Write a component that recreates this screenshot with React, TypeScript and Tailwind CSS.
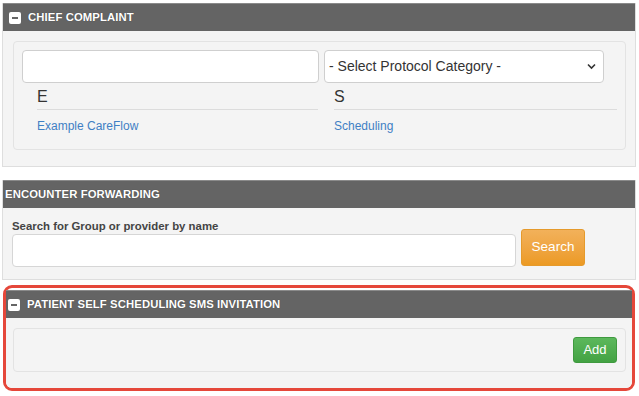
import React from 'react';

const MinusBox = () => (
  <span className="flex h-[12px] w-[12px] items-center justify-center rounded-[2px] bg-white">
    <span className="h-[2px] w-[6px] bg-[#666]" />
  </span>
);

const Header = ({ title, icon = true, inset = 'pl-[6px]' }: { title: string; icon?: boolean; inset?: string }) => (
  <div className={`flex h-[28px] items-center gap-[7px] bg-[#646464] border-t border-[#8a8a8a] ${inset}`}>
    {icon && <MinusBox />}
    <span className="text-[11.3px] font-bold text-white tracking-[0.1px] [text-shadow:0_0_1px_rgba(0,0,0,0.4)]">
      {title}
    </span>
  </div>
);

export default function App() {
  return (
    <div className="h-[396px] w-[639px] overflow-hidden bg-white px-[2px] pt-[3px] font-['Liberation_Sans',Arial,sans-serif] text-[#333]">
      {/* Chief complaint */}
      <div className="w-[634px] border-x border-b border-[#dedede] bg-[#f4f4f4]">
        <Header title="CHIEF COMPLAINT" />
        <div className="pb-[16px] pl-[10px] pr-[9px] pt-[10px]">
          <div className="rounded-[4px] border border-[#e3e3e3] bg-[#f4f4f4] px-[8px] pb-[15px] pt-[8px]">
            <div className="flex gap-[5px]">
              <input className="h-[33px] w-[297px] rounded-[4px] border border-[#cfcfcf] bg-white" />
              <div className="relative">
                <select className="h-[33px] w-[280px] appearance-none rounded-[4px] border border-[#cfcfcf] bg-white pl-[4px] text-[14px] text-[#333]">
                  <option>- Select Protocol Category -</option>
                </select>
                <svg
                  className="pointer-events-none absolute right-[8px] top-[13px]"
                  width="9"
                  height="7"
                  viewBox="0 0 9 7"
                  fill="none"
                  stroke="#333"
                  strokeWidth="1.6"
                >
                  <path d="M1 1.5l3.5 3.5 3.5-3.5" />
                </svg>
              </div>
            </div>
            <div className="ml-[15px] mt-[4px] flex gap-[16px]">
              <div className="w-[281px]">
                <div className="border-b border-[#dcdcdc] pb-[2px] text-[16px] leading-[20px]">E</div>
                <a className="mt-[8px] block text-[12px] leading-[16px] text-[#3f80c4]">Example CareFlow</a>
              </div>
              <div className="w-[283px]">
                <div className="border-b border-[#dcdcdc] pb-[2px] text-[16px] leading-[20px]">S</div>
                <a className="mt-[8px] block text-[12px] leading-[16px] text-[#3f80c4]">Scheduling</a>
              </div>
            </div>
          </div>
        </div>
      </div>

      {/* Encounter forwarding */}
      <div className="mt-[13px] w-[634px] border-x border-b border-[#dedede] bg-[#f4f4f4]">
        <Header title="ENCOUNTER FORWARDING" icon={false} inset="pl-[2px]" />
        <div className="flex items-end gap-[5px] pb-[12px] pl-[9px] pt-[11px]">
          <div>
            <div className="mb-[1px] text-[11.4px] font-bold leading-[14px] text-[#444]">
              Search for Group or provider by name
            </div>
            <input className="h-[33px] w-[504px] rounded-[4px] border border-[#d6d6d6] bg-white" />
          </div>
          <button className="mb-[1px] h-[37px] w-[64px] rounded-[3px] border border-[#e59a2c] bg-gradient-to-b from-[#f2b15a] to-[#ec9a22] text-[13.5px] text-white">
            Search
          </button>
        </div>
      </div>

      {/* Patient self scheduling */}
      <div className="ml-[1px] mt-[5px] w-[632px] rounded-[9px] border-[3px] border-[#e5473a] bg-white pt-[2px]">
        <div className="rounded-b-[6px] bg-[#f4f4f4] pb-[16px]">
          <Header title="PATIENT SELF SCHEDULING SMS INVITATION" inset="pl-[2px]" />
          <div className="pl-[7px] pr-[6px] pt-[10px]">
            <div className="flex justify-end rounded-[4px] border border-[#e3e3e3] bg-[#f4f4f4] px-[8px] py-[8px]">
              <button className="h-[26px] w-[44px] rounded-[3px] border border-[#3f9a3f] bg-gradient-to-b from-[#5cb85c] to-[#43a243] text-[13px] text-white">
                Add
              </button>
            </div>
          </div>
        </div>
      </div>
    </div>
  );
}
